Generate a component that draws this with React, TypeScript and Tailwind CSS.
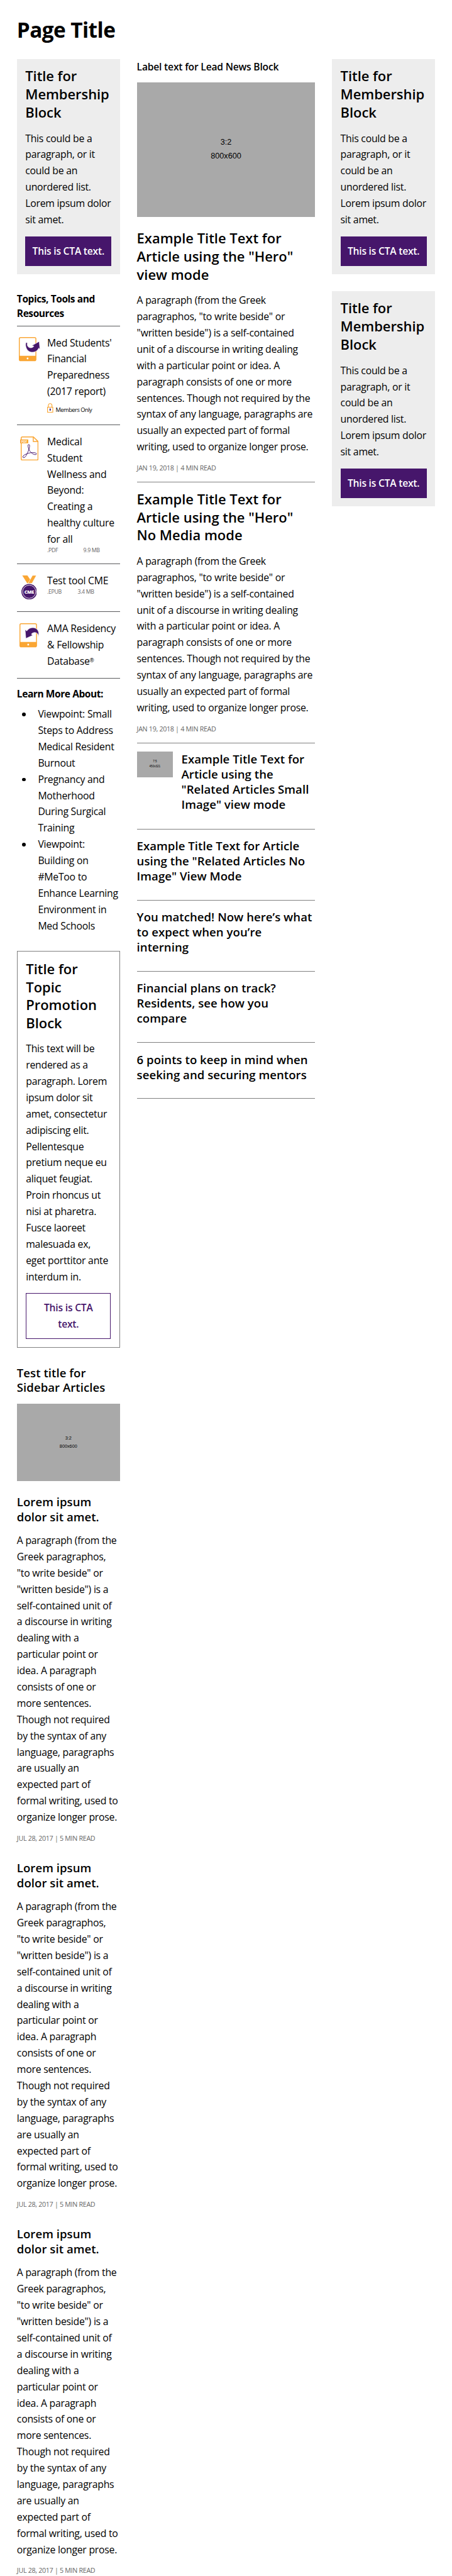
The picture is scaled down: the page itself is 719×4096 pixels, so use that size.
import type { ReactNode } from "react";

const heading = "text-[22.9px] leading-[30px] font-semibold";
const subheading = "text-[19.4px] leading-[25px] font-semibold tracking-[0.04px]";
const body = "text-[16.5px] leading-[27px] tracking-[-0.26px]";
const strong = "text-[16.2px] font-bold tracking-[-0.45px]";
const date = "text-[11.2px] leading-[18px] tracking-[-0.33px] text-[#666]";
const fileInfo = "text-[9.2px] leading-[12px] tracking-[-0.38px] text-[#666]";

function Lines({ of, className }: { of: ReactNode[]; className?: string }) {
  return (
    <span className={className}>
      {of.map((line, i) => (
        <span key={i} className="block whitespace-nowrap">
          {line}
        </span>
      ))}
    </span>
  );
}

function Membership() {
  return (
    <section className="flex h-[357px] flex-col bg-[#ededed] p-[14px]">
      <h2 className={heading}>
        <Lines of={["Title for", "Membership", "Block"]} className="tracking-[-0.05px]" />
      </h2>
      <p className={`mt-[14.5px] ${body}`}>
        <Lines
          of={["This could be a", "paragraph, or it", "could be an", "unordered list.", "Lorem ipsum dolor", "sit amet."]}
        />
      </p>
      <a className="mt-auto block h-[49px] bg-[#46166b] text-center text-[16.3px] leading-[49px] font-semibold tracking-[-0.22px] whitespace-nowrap text-white">
        This is CTA text.
      </a>
    </section>
  );
}

const orange = "#faa634";
const purple = "#46166b";

function Tablet({ children }: { children: ReactNode }) {
  return (
    <svg width="36" height="40" viewBox="0 0 36 40" className="overflow-visible">
      <rect x="0.75" y="0.75" width="27.5" height="38.5" rx="2.2" fill="#fff" stroke={orange} strokeWidth="1.5" />
      <path d="M0.5 31H28.5V37.5Q28.5 39.5 26.5 39.5H2.5Q0.5 39.5 0.5 37.5Z" fill={orange} />
      <circle cx="14.5" cy="35.5" r="1.5" fill="#fff" />
      {children}
    </svg>
  );
}

function TabletOut() {
  return (
    <Tablet>
      <path
        d="M11.7 9C10 15 13 23.8 20.5 25C27 25.7 31 22.5 33 18.2L35 20L33.8 7.2L21.5 14.2L25 15C22.5 18.5 16.8 18.8 14.8 15.2C13.7 13.2 13.7 11 14.4 9.3Z"
        fill={purple}
        stroke="#fff"
        strokeWidth="0.7"
      />
    </Tablet>
  );
}

function TabletIn() {
  return (
    <Tablet>
      <path
        d="M9.3 10.6L10.6 25.2L22.3 19.8L19.6 18.2C22 14.5 28.2 14.2 30.4 18C31.4 19.8 31.4 21.7 31 23.4C33.8 16.5 31 8.8 24.5 7.6C18.8 6.7 14.3 9.3 12.3 12.8Z"
        fill={purple}
        stroke="#fff"
        strokeWidth="0.7"
      />
    </Tablet>
  );
}

function PdfIcon() {
  return (
    <svg width="31" height="40" viewBox="0 0 31 40">
      <path d="M3.5 0.8H22L29.7 8.2V37.2Q29.7 39.2 27.7 39.2H3.8Q1.8 39.2 1.8 37.2V2.5Q1.8 0.8 3.5 0.8Z" fill="#fff" stroke={orange} strokeWidth="1.5" />
      <path d="M21.8 1V8.4H29.5" fill="none" stroke={orange} strokeWidth="1.5" />
      <rect x="0" y="5" width="13.5" height="6.3" fill={orange} />
      <text x="6.8" y="10" textAnchor="middle" fontSize="4.8" fontWeight="700" fill="#fff">PDF</text>
      <path
        d="M14.2 13.3C12 13.3 13.2 18.8 15.2 22.6C17.6 27.2 23 31.2 26.6 29.8C29.2 27.6 23 26 17.6 27C12 28 5.6 30.4 4.6 33.4C4.2 36.2 7.8 35.6 9.8 32C12.4 27.4 16.4 18.4 15.7 14.6C15.4 13.7 15 13.3 14.2 13.3Z"
        fill="none"
        stroke={purple}
        strokeWidth="1"
      />
    </svg>
  );
}

function CmeIcon() {
  return (
    <svg width="26" height="40" viewBox="0 0 26 40">
      <path d="M1.5 0H10L14.8 7L10.5 13H9.7Z" fill={orange} />
      <path d="M18.5 0H24.8L17.5 13H11.2Z" fill={orange} stroke="#fff" strokeWidth="0.5" />
      <circle cx="13" cy="27" r="12.9" fill={purple} />
      <circle cx="13" cy="27" r="10.9" fill="none" stroke="#fff" strokeWidth="0.9" />
      <text x="13" y="29.9" textAnchor="middle" fontSize="7.9" fontWeight="800" letterSpacing="-0.3" fill="#fff">CME</text>
    </svg>
  );
}

function LockIcon() {
  return (
    <svg width="10" height="16" viewBox="0 0 10 16">
      <path d="M2 7V4Q2 0.8 5 0.8T8 4V7" fill="none" stroke={orange} strokeWidth="1.2" />
      <rect x="0.6" y="6.8" width="8.8" height="8.4" fill="#fff" stroke={orange} strokeWidth="1.2" />
      <rect x="4" y="9" width="2" height="3.4" fill={purple} />
    </svg>
  );
}

function Tool({ icon, indent, height, children }: { icon: ReactNode; indent: string; height: string; children: ReactNode }) {
  return (
    <li className={`flex border-t border-[#58595b] pt-[18.5px] ${height}`}>
      <div className={`w-[50.3px] shrink-0 ${indent}`}>{icon}</div>
      <div className="-mt-[4px]">{children}</div>
    </li>
  );
}

const narrow = [
  "A paragraph (from the", "Greek paragraphos,", "\"to write beside\" or", "\"written beside\") is a", "self-contained unit of",
  "a discourse in writing", "dealing with a", "particular point or", "idea. A paragraph", "consists of one or", "more sentences.",
  "Though not required", "by the syntax of any", "language, paragraphs", "are usually an", "expected part of",
  "formal writing, used to", "organize longer prose.",
];

const wide = [
  "A paragraph (from the Greek", "paragraphos, \"to write beside\" or", "\"written beside\") is a self-contained",
  "unit of a discourse in writing dealing", "with a particular point or idea. A", "paragraph consists of one or more",
  "sentences. Though not required by the", "syntax of any language, paragraphs are", "usually an expected part of formal",
  "writing, used to organize longer prose.",
];

function SidebarArticle() {
  return (
    <article className="h-[607.3px]">
      <h3 className={subheading}>
        <Lines of={["Lorem ipsum", "dolor sit amet."]} />
      </h3>
      <p className={`mt-[14px] ${body}`}>
        <Lines of={narrow} />
      </p>
      <p className={`mt-[12px] ${date}`}>JUL 28, 2017 | 5 MIN READ</p>
    </article>
  );
}

function Hero({ title, className }: { title: string[]; className: string }) {
  return (
    <article className={`border-b border-[#808080] ${className}`}>
      <h2 className={heading}>
        <Lines of={title} />
      </h2>
      <p className={`mt-[14.3px] ${body}`}>
        <Lines of={wide} />
      </p>
      <p className={`mt-[12.5px] ${date}`}>JAN 19, 2018 | 4 MIN READ</p>
    </article>
  );
}

function Related({ title, className }: { title: string[]; className: string }) {
  return (
    <article className={`border-b border-[#808080] pt-[15px] ${className}`}>
      <h3 className={subheading}>
        <Lines of={title} />
      </h3>
    </article>
  );
}

export default function App() {
  return (
    <main className="h-[4272px] w-[750px] overflow-hidden bg-white px-7 font-['Open_Sans','Noto_Sans',sans-serif] text-black [zoom:0.9587]">
      <h1 className="h-[98px] pt-[25px] text-[34.8px] leading-[48px] font-bold tracking-[-0.6px]">Page Title</h1>
      <div className="flex items-start gap-7">
        <aside className="w-[171px] shrink-0">
          <Membership />

          <h4 className={`mt-[28.5px] h-[56.5px] leading-[25px] ${strong}`}>
            <Lines of={["Topics, Tools and", "Resources"]} />
          </h4>
          <ul className="border-b border-[#58595b]">
            <Tool icon={<TabletOut />} indent="pl-[3px]" height="h-[164px]">
              <Lines of={["Med Students'", "Financial", "Preparedness", "(2017 report)"]} className={body} />
              <div className="mt-[5px] flex items-end gap-[4px]">
                <LockIcon />
                <span className="mb-[-1.5px] text-[9.7px] leading-[12px] tracking-[-0.5px] whitespace-nowrap">Members Only</span>
              </div>
            </Tool>
            <Tool icon={<PdfIcon />} indent="pl-[5px]" height="h-[231px]">
              <Lines
                of={["Medical", "Student", "Wellness and", "Beyond:", "Creating a", "healthy culture", "for all"]}
                className={body}
              />
              <div className={`mt-[-1px] flex ${fileInfo}`}>
                <span className="w-[60px]">.PDF</span>
                <span>9.9 MB</span>
              </div>
            </Tool>
            <Tool icon={<CmeIcon />} indent="pl-[7px]" height="h-[79px]">
              <Lines of={["Test tool CME"]} className={body} />
              <div className={`mt-[-1px] flex ${fileInfo}`}>
                <span className="w-[50.5px]">.EPUB</span>
                <span>3.4 MB</span>
              </div>
            </Tool>
            <Tool icon={<TabletIn />} indent="pl-[4px]" height="h-[110px]">
              <Lines
                of={[
                  "AMA Residency",
                  "& Fellowship",
                  <>
                    Database<span className="relative -top-[4px] text-[9px] leading-none">®</span>
                  </>,
                ]}
                className={body}
              />
            </Tool>
          </ul>

          <h4 className={`mt-[13px] leading-[27px] ${strong}`}>Learn More About:</h4>
          <ul className={`mt-[6.5px] ${body}`}>
            {[
              ["Viewpoint: Small", "Steps to Address", "Medical Resident", "Burnout"],
              ["Pregnancy and", "Motherhood", "During Surgical", "Training"],
              ["Viewpoint:", "Building on", "#MeToo to", "Enhance Learning", "Environment in", "Med Schools"],
            ].map((item, i) => (
              <li key={i} className="flex">
                <span className="mt-[10.5px] mr-[20px] ml-[9px] size-[6px] shrink-0 rounded-full bg-black" />
                <Lines of={item} />
              </li>
            ))}
          </ul>

          <section className="mt-[28px] flex h-[658px] flex-col border border-[#808080] p-[14px]">
            <h2 className={heading}>
              <Lines of={["Title for", "Topic", "Promotion", "Block"]} />
            </h2>
            <p className={`mt-[14px] ${body}`}>
              <Lines
                of={[
                  "This text will be", "rendered as a", "paragraph. Lorem", "ipsum dolor sit", "amet, consectetur", "adipiscing elit.",
                  "Pellentesque", "pretium neque eu", "aliquet feugiat.", "Proin rhoncus ut", "nisi at pharetra.", "Fusce laoreet",
                  "malesuada ex,", "eget porttitor ante", "interdum in.",
                ]}
              />
            </p>
            <a className="mt-auto block h-[76px] border border-[#46166b] pt-[10.5px] text-center text-[16.3px] leading-[27px] font-semibold tracking-[-0.2px] text-[#46166b]">
              <Lines of={["This is CTA", "text."]} />
            </a>
          </section>

          <h3 className={`mt-[28.5px] ${subheading}`}>
            <Lines of={["Test title for", "Sidebar Articles"]} />
          </h3>
          <div className="mt-[14px] mb-[22px] flex h-[128px] flex-col items-center justify-center bg-[#a9a9a9] pt-px font-['Liberation_Sans'] text-[7.6px] leading-[13px]">
            <span>3:2</span>
            <span>800x600</span>
          </div>
          <SidebarArticle />
          <SidebarArticle />
          <SidebarArticle />
        </aside>

        <div className="w-[296px] shrink-0">
          <h4 className="h-[39px] text-[16.3px] leading-[26px] font-semibold tracking-[-0.2px] whitespace-nowrap">
            Label text for Lead News Block
          </h4>
          <div className="mb-[21px] flex h-[223px] flex-col items-center justify-center bg-[#a9a9a9] font-['Liberation_Sans'] text-[13.2px] leading-[22.7px]">
            <span>3:2</span>
            <span>800x600</span>
          </div>
          <Hero title={["Example Title Text for", "Article using the \"Hero\"", "view mode"]} className="h-[419px]" />
          <Hero title={["Example Title Text for", "Article using the \"Hero\"", "No Media mode"]} className="h-[432.5px] pt-[13.5px]" />
          <article className="flex h-[143.2px] items-start gap-[14px] border-b border-[#808080] pt-[14px]">
            <div className="flex h-[43px] w-[60px] shrink-0 flex-col items-center justify-center bg-[#a9a9a9] pb-px font-['Liberation_Sans'] text-[4.8px] leading-[8.4px]">
              <span>7:5</span>
              <span>450x321</span>
            </div>
            <h3 className={`mt-[0.5px] ${subheading}`}>
              <Lines of={["Example Title Text for", "Article using the", "\"Related Articles Small", "Image\" view mode"]} />
            </h3>
          </article>
          <Related title={["Example Title Text for Article", "using the \"Related Articles No", "Image\" View Mode"]} className="h-[118px]" />
          <Related title={["You matched! Now here’s what", "to expect when you’re", "interning"]} className="h-[118px]" />
          <Related title={["Financial plans on track?", "Residents, see how you", "compare"]} className="h-[118px]" />
          <Related title={["6 points to keep in mind when", "seeking and securing mentors"]} className="h-[93px]" />
        </div>

        <aside className="flex w-[171px] shrink-0 flex-col gap-7">
          <Membership />
          <Membership />
        </aside>
      </div>
    </main>
  );
}
